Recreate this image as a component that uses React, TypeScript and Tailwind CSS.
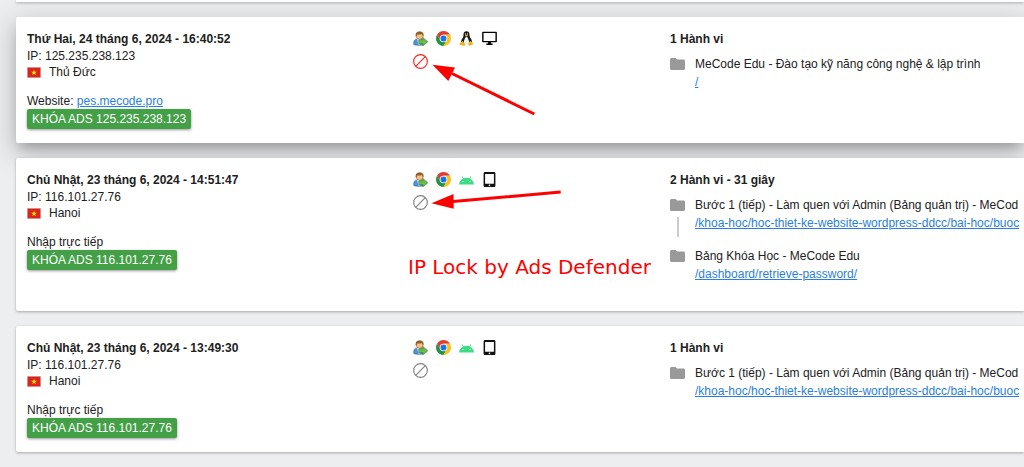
import { clsx } from "clsx"

type Action = { title: string; path: string }

type Visit = {
  id: number
  time: string
  ip: string
  city: string
  website?: string
  device: "desktop" | "android"
  locked: boolean
  active: boolean
  summary: string
  actions: Action[]
}

const LESSON: Action = {
  title: "Bước 1 (tiếp) - Làm quen với Admin (Bảng quản trị) - MeCod",
  path: "/khoa-hoc/hoc-thiet-ke-website-wordpress-ddcc/bai-hoc/buoc",
}

const VISITS: Visit[] = [
  {
    id: 1,
    time: "Thứ Hai, 24 tháng 6, 2024 - 16:40:52",
    ip: "125.235.238.123",
    city: "Thủ Đức",
    website: "pes.mecode.pro",
    device: "desktop",
    locked: true,
    active: true,
    summary: "1 Hành vi",
    actions: [{ title: "MeCode Edu - Đào tạo kỹ năng công nghệ & lập trình", path: "/" }],
  },
  {
    id: 2,
    time: "Chủ Nhật, 23 tháng 6, 2024 - 14:51:47",
    ip: "116.101.27.76",
    city: "Hanoi",
    device: "android",
    locked: false,
    active: false,
    summary: "2 Hành vi - 31 giây",
    actions: [LESSON, { title: "Bảng Khóa Học - MeCode Edu", path: "/dashboard/retrieve-password/" }],
  },
  {
    id: 3,
    time: "Chủ Nhật, 23 tháng 6, 2024 - 13:49:30",
    ip: "116.101.27.76",
    city: "Hanoi",
    device: "android",
    locked: false,
    active: false,
    summary: "1 Hành vi",
    actions: [LESSON],
  },
]

function FlagIcon() {
  return (
    <svg viewBox="0 0 14 11" className="h-[11px] w-[14px]">
      <rect width="14" height="11" fill="#d9d0d0" />
      <rect x="0.6" y="0.6" width="12.8" height="9.8" fill="#da251d" />
      <path d="M7 2.7l.7 2h2.1L8.1 6l.6 2.1L7 6.9 5.3 8.1l.6-2.1-1.7-1.3h2.1z" fill="#ffec00" />
    </svg>
  )
}

function VisitorIcon() {
  return (
    <svg viewBox="0 0 16 16" className="size-[15px]">
      <path d="M.7 14.300c-.3-3.800.9-5.600 3.600-5.800h4.400c2 .2 3 1.500 3 3.500l-1 2.900c-3 .7-8 .5-10-.6z" fill="#4b93dc" stroke="#1d5592" strokeWidth=".5" />
      <path d="M4.400 8.600h4l-1 5.900H5.800z" fill="#e4f2fd" />
      <circle cx="7.200" cy="5" r="3.800" fill="#f5c088" stroke="#80501f" strokeWidth=".5" />
      <path d="M3 5.800C2.300 2.400 4 .5 7.100.5c3.200 0 4.700 2 4 4.800-.9-.5-1.400-1.300-1.600-2.200-1.800.8-4 .8-5 .5-.1.900-.5 1.700-1.500 2.200z" fill="#8f5c2a" />
      <path d="M6.200 9.400h4.200V6.900l5.400 4.600-5.400 4.400v-2.500H6.200z" fill="#6cbc4c" stroke="#3a8229" strokeWidth=".7" />
    </svg>
  )
}

function ChromeIcon() {
  return (
    <svg viewBox="0 0 48 48" className="size-[15px]">
      <path d="M24 12h20.780A24 24 0 0 0 3.220 12l10.390 18z" fill="#e33b2e" />
      <path d="M13.610 30L3.220 12A24 24 0 0 0 24 48l10.390-18z" fill="#229342" />
      <path d="M34.390 30L24 48A24 24 0 0 0 44.780 12H24z" fill="#fbc116" />
      <circle cx="24" cy="24" r="12" fill="#fff" />
      <circle cx="24" cy="24" r="9.500" fill="#1a73e8" />
    </svg>
  )
}

function LinuxIcon() {
  return (
    <svg viewBox="0 0 16 16" className="size-[15px]">
      <path d="M8 .2C5.600.2 4.700 1.800 4.800 3.900c.1 1.900-.6 2.900-1.500 4.400-.9 1.500-1.300 3.300-1 5.200h11.400c.4-2.100-.1-4-1.100-5.500-.9-1.500-1.400-2.300-1.400-4.100C11.200 1.700 10.400.2 8 .2z" fill="#181818" />
      <path d="M8 6.400c-1 0-1.400.6-1.800 1.800-.6 1.500-1.300 2.700-1.100 4.200.2 1.500 1.300 2.300 2.900 2.300s2.800-.9 2.900-2.400c.1-1.500-.7-2.700-1.100-4.100-.4-1.200-.8-1.800-1.800-1.800z" fill="#f4f4f4" />
      <circle cx="6.900" cy="3.200" r=".7" fill="#ddd" />
      <circle cx="9.100" cy="3.200" r=".7" fill="#ddd" />
      <path d="M6.200 4.800L8 4l1.800.8L8 6.200z" fill="#f0b323" />
      <path d="M1.900 11.900l1.800-1.200 3 3.500c0 1.300-1 1.800-2.200 1.600l-3.200-.9c-.8-.3-.1-1.200-.2-1.800-.1-.7.200-1.100.8-1.200zM14 11.900l-1.800-1.200c-1.400.8-2.300 2.400-2.300 3.800 0 1.200 1.500 1.600 2.300 1l2.700-1.400c.6-.5-.1-.8-.2-1.300-.1-.5-.2-.8-.7-.9z" fill="#f0b41c" />
    </svg>
  )
}

function AndroidIcon() {
  return (
    <svg viewBox="0 0 24 24" className="size-[15px]">
      <path
        d="M17.700 10.200l2.100-3.500-.9-.5-2.200 3.700A13.500 13.500 0 0 0 12 9.100c-1.700 0-3.300.3-4.700.8L5.100 6.200l-.9.5 2.100 3.500C2.900 12.100.4 15.400 0 19.800h24c-.4-4.400-2.900-7.700-6.300-9.600z"
        fill="#3ddc84"
      />
      <circle cx="6.500" cy="15.200" r="1" fill="#fff" />
      <circle cx="17.500" cy="15.200" r="1" fill="#fff" />
    </svg>
  )
}

function DesktopIcon() {
  return (
    <svg viewBox="0 0 16 16" className="size-[15px]">
      <path d="M.9 1.500h14.200v9.800H.9z" fill="none" stroke="#000" strokeWidth="1.500" strokeLinejoin="round" />
      <path d="M6.500 11.300h3v2h1.800v1.500H4.700v-1.500h1.800z" fill="#000" />
    </svg>
  )
}

function TabletIcon() {
  return (
    <svg viewBox="0 0 16 16" className="size-[15px]">
      <path d="M3.400 0h9.200c1 0 1.700.7 1.700 1.700v12.600c0 1-.7 1.700-1.700 1.700H3.400c-1 0-1.700-.7-1.700-1.700V1.700C1.700.7 2.400 0 3.400 0zM3.300 2.100v10.400h9.400V2.100z" fill="#111" fillRule="evenodd" />
      <circle cx="8" cy="14.200" r=".9" fill="#fff" />
    </svg>
  )
}

function BlockIcon() {
  return (
    <svg viewBox="0 0 16 16" className="size-[15px]" fill="none" stroke="currentColor" strokeWidth="1.200">
      <circle cx="8" cy="8" r="7.300" />
      <path d="M2.900 13.100L13.100 2.900" />
    </svg>
  )
}

function FolderIcon() {
  return (
    <svg viewBox="0 0 15 12" className="h-3 w-[15px]">
      <path d="M1.500 0h4l1.600 1.500h6.400c.8 0 1.500.7 1.500 1.500v7.500c0 .8-.7 1.500-1.500 1.500h-12C.7 12 0 11.300 0 10.500v-9C0 .7.700 0 1.500 0z" fill="#999" />
    </svg>
  )
}

function VisitCard({ visit }: { visit: Visit }) {
  return (
    <article
      className={clsx(
        "relative grid grid-cols-[minmax(0,386fr)_minmax(0,257fr)_minmax(0,354fr)] rounded-l-[2px] bg-white py-[14px] pl-[11px]",
        visit.active
          ? "shadow-[0_8px_12px_-4px_rgba(0,0,0,0.24),0_8px_28px_3px_rgba(0,0,0,0.2)]"
          : "shadow-[0_1px_3px_rgba(0,0,0,0.3)]",
      )}
    >
      {/* Who and where */}
      <div>
        <h2 className="leading-[17px] font-bold">{visit.time}</h2>
        <p>IP: {visit.ip}</p>
        <p className="flex items-center gap-2">
          <FlagIcon />
          {visit.city}
        </p>
        <p className="mt-[13px]">
          {visit.website ? (
            <>
              Website:{" "}
              <a href={`https://${visit.website}`} className="text-[#2a7fdb] underline">
                {visit.website}
              </a>
            </>
          ) : (
            "Nhập trực tiếp"
          )}
        </p>
        <button className="block h-5 rounded-[2px] bg-[#43a047] px-[5px] leading-5 text-white shadow-[0_1px_3px_rgba(0,0,0,0.4)]">
          KHÓA ADS {visit.ip}
        </button>
      </div>

      {/* Browser, system and device */}
      <div className="flex flex-col items-start gap-2">
        <div className="flex gap-2">
          <VisitorIcon />
          <ChromeIcon />
          {visit.device === "desktop" ? (
            <>
              <LinuxIcon />
              <DesktopIcon />
            </>
          ) : (
            <>
              <AndroidIcon />
              <TabletIcon />
            </>
          )}
        </div>
        <button aria-label="IP Lock" className={visit.locked ? "text-[#ff2020]" : "text-[#808080]"}>
          <BlockIcon />
        </button>
      </div>

      {/* Pages visited */}
      <div className="overflow-hidden">
        <h3 className="mb-[7px] leading-[17px] font-bold">{visit.summary}</h3>
        <ul>
          {visit.actions.map((action, i) => (
            <li key={action.path} className="flex gap-[10px] pb-[15px] leading-[18px] whitespace-nowrap last:pb-[14px]">
              <div className="flex shrink-0 flex-col items-center gap-[6px] pt-[3px]">
                <FolderIcon />
                {i < visit.actions.length - 1 && <span className="-mb-2 h-5 w-[2px] bg-[#ccc]" />}
              </div>
              <div>
                <p>{action.title}</p>
                <a href={action.path} className="block w-fit text-[#2a7fdb] underline">
                  {action.path}
                </a>
              </div>
            </li>
          ))}
        </ul>
      </div>
    </article>
  )
}

function Notes() {
  return (
    <div className="pointer-events-none absolute top-0 left-0">
      <svg width="600" height="220" viewBox="0 0 600 220" fill="#f00" stroke="#f00">
        <path d="M452 73.500L534.300 114M453 201.600L560.700 192" strokeWidth="3" />
        <path d="M432.500 64.700L455 67.500L448.300 81zM431.500 203.200L453.500 194L453.700 208.700z" stroke="none" />
      </svg>
      <p className="absolute top-[254px] left-[408px] font-['DejaVu_Sans',sans-serif] text-[20px] leading-[26px] whitespace-nowrap text-[#f00]">
        IP Lock by Ads Defender
      </p>
    </div>
  )
}

export default function App() {
  return (
    <main className="relative min-h-screen overflow-hidden bg-[#edeef0] font-['Liberation_Sans',Arial,sans-serif] text-[12px] leading-4 text-[#212121]">
      <div className="flex flex-col gap-[15px] pl-4">
        <div className="h-[2px] bg-white shadow-[0_1px_3px_rgba(0,0,0,0.3)]" />
        {VISITS.map((visit) => (
          <VisitCard key={visit.id} visit={visit} />
        ))}
      </div>
      <Notes />
    </main>
  )
}
